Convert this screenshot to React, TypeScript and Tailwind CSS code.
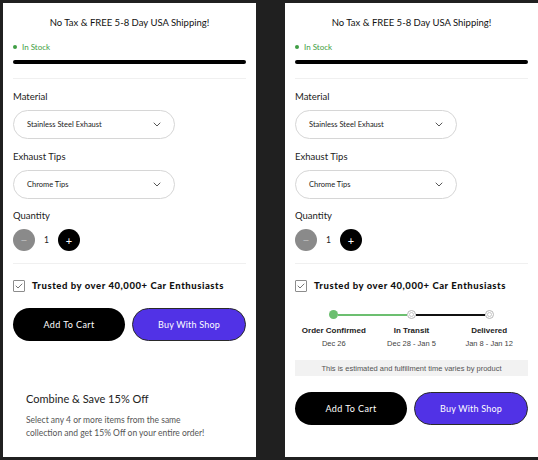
import React from "react";

const Chevron = () => (
  <svg width="8" height="5" viewBox="0 0 8 5" fill="none">
    <path d="M1 1l3 3 3-3" stroke="#444" strokeWidth="0.9" strokeLinecap="round" strokeLinejoin="round" />
  </svg>
);

const Select = ({ value }: { value: string }) => (
  <div className="mt-[7px] w-[162px] h-[29px] rounded-full border border-[#d6d6d6] flex items-center justify-between pl-[13px] pr-[13px]">
    <span className="text-[7.5px] text-[#222]">{value}</span>
    <Chevron />
  </div>
);

const OpenDot = () => (
  <span className="w-[9px] h-[9px] rounded-full border border-[#b8b8b8] bg-white flex items-center justify-center shrink-0">
    <span className="w-[5px] h-[5px] rounded-full border border-[#c8c8c8]"></span>
  </span>
);

const Stepper = () => (
  <div className="mt-[17px]">
    {/* progress line */}
    <div className="flex items-center px-[34px]">
      <span className="w-[9px] h-[9px] rounded-full bg-[#6cbf70] shrink-0"></span>
      <span className="flex-1 h-[1.5px] bg-[#6cbf70]"></span>
      <OpenDot />
      <span className="flex-1 h-[1.5px] bg-[#111]"></span>
      <OpenDot />
    </div>

    <div className="grid grid-cols-3 text-center font-['Liberation_Sans',sans-serif]">
      <div>
        <p className="mt-[7px] text-[8px] leading-[10px] font-bold text-[#222]">Order Confirmed</p>
        <p className="mt-[3px] text-[7.5px] leading-[10px] text-[#444]">Dec 26</p>
      </div>
      <div>
        <p className="mt-[7px] text-[8px] leading-[10px] font-bold text-[#222]">In Transit</p>
        <p className="mt-[3px] text-[7.5px] leading-[10px] text-[#444]">Dec 28 - Jan 5</p>
      </div>
      <div>
        <p className="mt-[7px] text-[8px] leading-[10px] font-bold text-[#222]">Delivered</p>
        <p className="mt-[3px] text-[7.5px] leading-[10px] text-[#444]">Jan 8 - Jan 12</p>
      </div>
    </div>

    <div className="mt-[11px] h-[16px] bg-[#f2f2f2] flex items-center justify-center font-['Liberation_Sans',sans-serif] text-[7.5px] text-[#555]">
      This is estimated and fulfillment time varies by product
    </div>
  </div>
);

const Panel = ({ withStepper }: { withStepper?: boolean }) => {
  return (
    <section className="w-[253px] h-[454px] bg-white px-[10px] font-['Lato',sans-serif] text-[#222]">
      <p className="mt-[14px] text-center text-[9.5px] leading-[12px] text-[#111]">
        No Tax &amp; FREE 5-8 Day USA Shipping!
      </p>

      <div className="mt-[13px] flex items-center gap-[5px] h-[10px]">
        <span className="w-[4px] h-[4px] rounded-full bg-[#3f9e44]"></span>
        <span className="text-[8px] leading-[10px] text-[#3f9e44]">In Stock</span>
      </div>

      <div className="mt-[8px] h-[4px] rounded-full bg-black"></div>
      <div className="mt-[14px] h-px bg-[#f0f0f0]"></div>

      <p className="mt-[12px] text-[9.5px] leading-[12px]">Material</p>
      <Select value="Stainless Steel Exhaust" />

      <p className="mt-[12px] text-[9.5px] leading-[12px]">Exhaust Tips</p>
      <Select value="Chrome Tips" />

      <p className="mt-[11px] text-[9.5px] leading-[12px]">Quantity</p>
      <div className="mt-[7px] flex items-center">
        <button className="w-[22px] h-[22px] rounded-full bg-[#8a8a8a] text-[#bdbdbd] flex items-center justify-center text-[12px] leading-none">
          −
        </button>
        <span className="w-[23px] text-center text-[8.5px]">1</span>
        <button className="w-[22px] h-[22px] rounded-full bg-black text-white flex items-center justify-center text-[11px] leading-none">
          +
        </button>
      </div>

      <div className="mt-[12px] h-px bg-[#f0f0f0]"></div>

      {/* trust badge */}
      <div className="mt-[15px] flex items-center gap-[7px]">
        <span className="w-[12px] h-[12px] border border-[#8c8c8c] rounded-[1px] flex items-center justify-center">
          <svg width="8" height="6" viewBox="0 0 8 6" fill="none">
            <path d="M1 3l2 2 4-4" stroke="#666" strokeWidth="0.9" strokeLinecap="round" strokeLinejoin="round" />
          </svg>
        </span>
        <span className="text-[9.5px] font-black tracking-[0.55px] text-[#111]">
          Trusted by over 40,000+ Car Enthusiasts
        </span>
      </div>

      {withStepper && <Stepper />}

      <div className={`${withStepper ? "mt-[16px]" : "mt-[15px]"} flex gap-[7px]`}>
        <button className="flex-1 h-[33px] rounded-full bg-black text-white text-[9px] tracking-[0.4px]">
          Add To Cart
        </button>
        <button className="flex-1 h-[33px] rounded-full bg-[#5132e6] border border-[#2a2a2a] text-white text-[9px] tracking-[0.2px]">
          Buy With Shop
        </button>
      </div>

      {!withStepper && (
        <div className="mt-[51px] pl-[13px] pr-[30px]">
          <p className="text-[11px] leading-[14px] text-[#222]">Combine &amp; Save 15% Off</p>
          <p className="mt-[8px] text-[8.5px] leading-[13px] text-[#555]">
            Select any 4 or more items from the same collection and get 15% Off on your entire order!
          </p>
        </div>
      )}
    </section>
  );
};

const App = () => {
  return (
    <div className="w-[538px] h-[460px] bg-[#202020] overflow-hidden pt-[3px] pl-[3px] flex gap-[29px]">
      <Panel />
      <Panel withStepper />
    </div>
  );
};

export default App;
